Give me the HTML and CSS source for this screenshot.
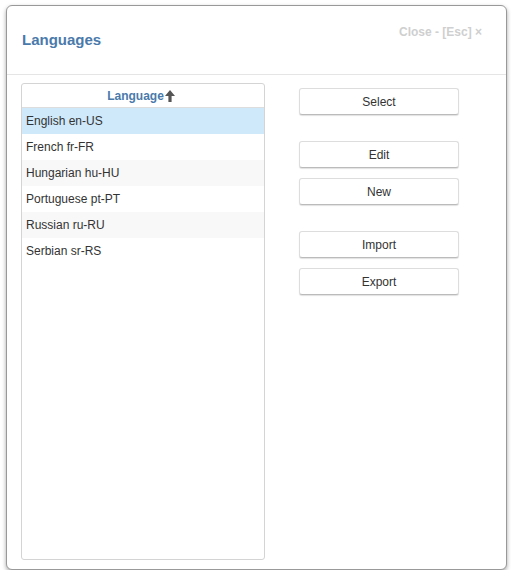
FILE: index.html
```html
<!DOCTYPE html>
<html lang="en">
<head>
<meta charset="UTF-8" />
<title>Languages</title>
<link rel="stylesheet" href="styles.css">
</head>
<body>
  <div class="dialog">
    <div class="dialog-header">
      <h1>Languages</h1>
      <span class="close">Close - [Esc] &times;</span>
    </div>
    <div class="dialog-body">
      <div class="lang-table">
        <div class="lang-head">
          Language<svg class="sort" width="10" height="12" viewBox="0 0 10 12"><path d="M5 0 L10 6 H6.6 V12 H3.4 V6 H0 Z" fill="#555"/></svg>
        </div>
        <div class="lang-row selected">English en-US</div>
        <div class="lang-row">French fr-FR</div>
        <div class="lang-row">Hungarian hu-HU</div>
        <div class="lang-row">Portuguese pt-PT</div>
        <div class="lang-row">Russian ru-RU</div>
        <div class="lang-row">Serbian sr-RS</div>
      </div>
      <div class="actions">
        <button>Select</button>
        <button class="gap">Edit</button>
        <button>New</button>
        <button class="gap">Import</button>
        <button>Export</button>
      </div>
    </div>
  </div>
</body>
</html>
```

FILE: styles.css
```css
body {
  margin: 0;
  background: #fff;
  font-family: "Liberation Sans", Arial, sans-serif;
  color: #333;
}

/* dialog window */
.dialog {
  margin: 5px 0 0 6px;
  width: 499px;
  height: 563px;
  border: 1px solid #999;
  border-radius: 6px;
  box-shadow: 0 2px 4px rgba(0,0,0,0.35);
  background: #fff;
  display: flex;
  flex-direction: column;
}
.dialog-header {
  height: 68px;
  border-bottom: 1px solid #e5e5e5;
  display: flex;
  justify-content: space-between;
  align-items: flex-start;
  padding: 0 24px 0 15px;
}
.dialog-header h1 {
  margin: 25px 0 0;
  font-size: 15px;
  font-weight: 700;
  color: #4a7aab;
}
.close {
  margin-top: 19px;
  font-size: 12px;
  font-weight: 700;
  color: #cfcfcf;
}

.dialog-body {
  flex: 1;
  display: flex;
  padding: 8px 0 9px 14px;
}

/* language list */
.lang-table {
  width: 242px;
  border: 1px solid #d4d4d4;
  border-radius: 3px;
}
.lang-head {
  height: 23px;
  border-bottom: 1px solid #ddd;
  display: flex;
  justify-content: center;
  align-items: center;
  padding-right: 4px;
  font-size: 12px;
  font-weight: 700;
  color: #4a7aab;
}
.sort {
  margin-left: 1px;
}
.lang-row {
  height: 26px;
  line-height: 26px;
  padding-left: 4px;
  font-size: 12px;
  color: #333;
}
.lang-row:nth-child(even) {
  background: #f8f8f8;
}
.lang-row.selected {
  background: #cfe9fb;
}

/* buttons */
.actions {
  margin-left: 34px;
  padding-top: 5px;
  display: flex;
  flex-direction: column;
  gap: 10px;
}
.actions button {
  width: 160px;
  height: 27px;
  background: #fff;
  border: 1px solid #ddd;
  border-bottom-color: #bbb;
  border-radius: 3px;
  box-shadow: 0 1px 1px rgba(0,0,0,0.12);
  font-family: inherit;
  font-size: 12px;
  color: #333;
  cursor: pointer;
}
.actions button.gap {
  margin-top: 16px;
}
```
